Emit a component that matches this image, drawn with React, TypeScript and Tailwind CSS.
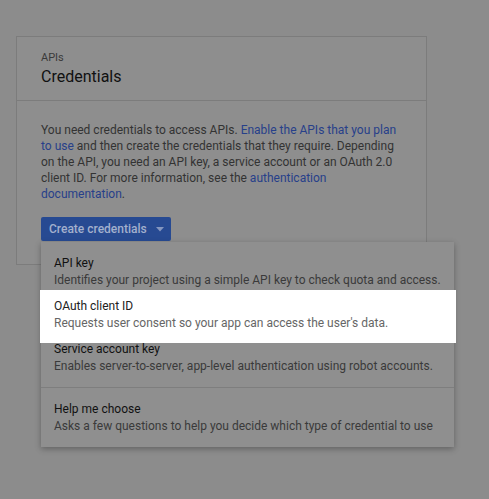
import React from "react";

const items = [
  { t: "API key", d: "Identifies your project using a simple API key to check quota and access." },
  { t: "OAuth client ID", d: "Requests user consent so your app can access the user's data.", hl: true },
  { t: "Service account key", d: "Enables server-to-server, app-level authentication using robot accounts." },
];

function Item({ t, d, hl }: { t: string; d: string; hl?: boolean }) {
  return (
    <div className="relative px-[13px] pt-[5px] pb-[4px]">
      {hl && <div className="absolute top-[-3px] bottom-[-7px] left-[-1px] right-[-2px] bg-white" />}
      <div className={`relative leading-[17px] text-[12px] ${hl ? "text-[#212121]" : "text-[#111]"}`}>{t}</div>
      <div className={`relative leading-[17px] text-[12px] ${hl ? "text-[#666]" : "text-[#3a3a3a]"}`}>{d}</div>
    </div>
  );
}

export default function App() {
  return (
    <div className="w-[489px] h-[499px] bg-[#8c8c8c] pt-[36px] pl-[16px]" style={{ fontFamily: "Roboto, 'Noto Sans', sans-serif" }}>
      <div className="relative w-[411px] border border-[#7c7c7c] bg-[#8e8e8e]">
        <div className="px-[24px] pt-[14px] pb-[13px] border-b border-[#7c7c7c]">
          <div className="text-[11px] leading-[14px] text-[#3a3a3a]">APIs</div>
          <div className="mt-[2px] text-[16px] leading-[20px] text-[#111]">Credentials</div>
        </div>
        <div className="px-[24px] pt-[21px] pb-[23px]">
          <p className="text-[12px] leading-[16px] text-[#333]">
            You need credentials to access APIs. <span className="text-[#27408a]">Enable the APIs that you plan to use</span> and then create the credentials that they require. Depending on the API, you need an API key, a service account or an OAuth 2.0 client ID. For more information, see the <span className="text-[#27408a]">authentication documentation</span>.
          </p>
          <div className="mt-[15px] inline-flex items-center h-[24px] w-[130px] bg-[#274a92] rounded-[2px] pl-[8px]">
            <span className="text-[12px] font-medium text-[#a3b0cd]">Create credentials</span>
            <svg width="8" height="5" viewBox="0 0 8 5" className="ml-[9px]"><path d="M0 0h8L4 4.5z" fill="#8597c0" /></svg>
          </div>
        </div>
        <div className="absolute left-[24px] top-[205px] w-[413px] bg-[#8f8f8f] shadow-[0_2px_6px_rgba(0,0,0,0.3)]">
          <div className="pt-[8px] pb-[8px] border-b border-[#7e7e7e]">
            {items.map((it) => (
              <Item key={it.t} {...it} />
            ))}
          </div>
          <div className="pt-[8px] pb-[8px]">
            <Item t="Help me choose" d="Asks a few questions to help you decide which type of credential to use" />
          </div>
        </div>
      </div>
    </div>
  );
}
